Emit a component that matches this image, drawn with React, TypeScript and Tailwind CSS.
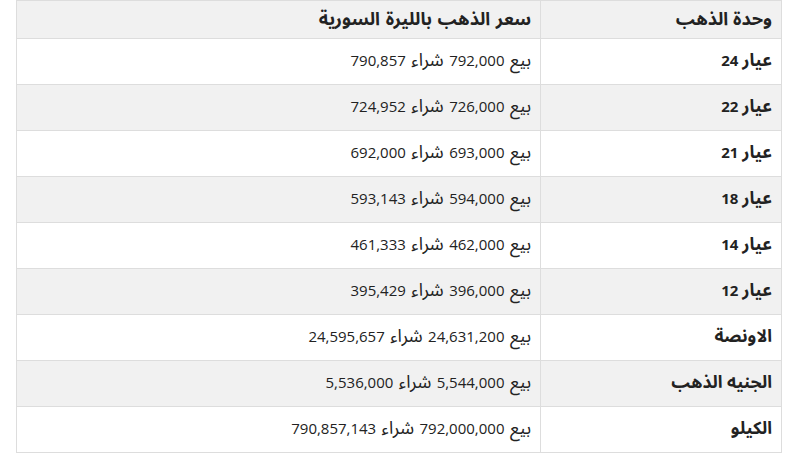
const rows: [string, string, string, string][] = [
  ['عيار', '24', '792,000', '790,857'],
  ['عيار', '22', '726,000', '724,952'],
  ['عيار', '21', '693,000', '692,000'],
  ['عيار', '18', '594,000', '593,143'],
  ['عيار', '14', '462,000', '461,333'],
  ['عيار', '12', '396,000', '395,429'],
  ['الاونصة', '', '24,631,200', '24,595,657'],
  ['الجنيه الذهب', '', '5,544,000', '5,536,000'],
  ['الكيلو', '', '792,000,000', '790,857,143'],
];

const App = () => {
  return (
    <div
      dir="rtl"
      className="w-[795px] h-[463px] bg-white pl-[16px] pr-[13px] text-[#222]"
      style={{ fontFamily: '"Open Sans", "Noto Sans Arabic", "Noto Sans", "DejaVu Sans", sans-serif' }}
    >
      <table className="w-full border-collapse border border-[#ddd] text-[15px] leading-[20px]">
        <thead>
          <tr className="h-[38px] bg-[#f1f1f1]">
            <th className="w-[241px] border border-[#ddd] px-[9px] pb-[3px] text-right text-[18px] font-bold">وحدة الذهب</th>
            <th className="border border-[#ddd] px-[9px] pb-[3px] text-right text-[18px] font-bold [word-spacing:1px]">سعر الذهب بالليرة السورية</th>
          </tr>
        </thead>
        <tbody>
          {rows.map(([unit, num, sell, buy], i) => (
            <tr key={unit + num} className={`h-[46px] ${i % 2 === 1 ? 'bg-[#f1f1f1]' : 'bg-white'}`}>
              <td className="border border-[#ddd] px-[9px] pb-[5px] text-right font-bold">
                <span className="text-[17.5px] leading-[20px]">{unit}</span>
                {num && <> {num}</>}
              </td>
              <td className="border border-[#ddd] px-[9px] pb-[5px] text-right [word-spacing:1.5px]">
                <span className="text-[18px] leading-[20px]">بيع</span> {sell}{' '}
                <span className="text-[18px] leading-[20px]">شراء</span> {buy}
              </td>
            </tr>
          ))}
        </tbody>
      </table>
    </div>
  );
};

export default App;
